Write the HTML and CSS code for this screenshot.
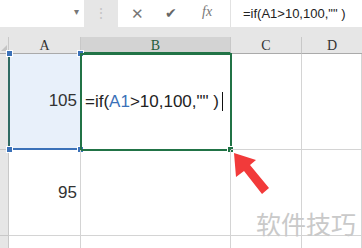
FILE: index.html
```html
<!DOCTYPE html>
<html lang="zh">
<head>
  <meta charset="UTF-8">
  <title>Excel</title>
  <link rel="stylesheet" href="styles.css">
</head>
<body>
  <div class="topbar">
    <div class="namebox"><span class="drop">▾</span></div>
    <div class="grip">⋮</div>
    <div class="fbar">
      <span class="ico cancel">✕</span>
      <span class="ico ok">✔</span>
      <span class="ico fx">fx</span>
      <span class="fdiv"></span>
      <span class="ftext">=if(A1&gt;10,100,"" )</span>
    </div>
  </div>
  <div class="gap"></div>
  <div class="sheet">
    <div class="corner"></div>
    <div class="colhead">A</div>
    <div class="colhead sel">B</div>
    <div class="colhead">C</div>
    <div class="colhead last">D</div>

    <div class="rowhead"></div>
    <div class="cell num ref">105
      <i class="h tl"></i><i class="h tr"></i><i class="h bl"></i><i class="h br"></i>
    </div>
    <div class="cell edit">=if(<span class="refc">A1</span>&gt;10,100,"" )<span class="caret"></span>
      <i class="fill"></i>
    </div>
    <div class="cell"></div>
    <div class="cell"></div>

    <div class="rowhead"></div>
    <div class="cell num">95</div>
    <div class="cell"></div>
    <div class="cell"></div>
    <div class="cell"></div>

    <div class="rowhead"></div>
    <div class="cell"></div>
    <div class="cell"></div>
    <div class="cell"></div>
    <div class="cell"></div>
  </div>

  <svg class="arrow" width="60" height="60" viewBox="0 0 60 60">
    <polygon points="1,1 3,25 11,19 29,42 36,36 17,13 23,8" fill="#f23a3a"/>
  </svg>
  <div class="mark">软件技巧</div>
</body>
</html>
```

FILE: styles.css
```css
body { margin: 0; width: 362px; height: 248px; overflow: hidden; background: #e6e6e6; position: relative;
  font-family: "Liberation Sans", Arial, sans-serif; color: #333; }

.topbar { display: flex; height: 27px; }
.namebox { width: 84px; background: #fff; position: relative; }
.drop { position: absolute; left: 74px; top: 6px; font-size: 10px; color: #777; }
.grip { width: 34px; text-align: center; color: #c4c4c4; font-size: 14px; line-height: 26px; }
.fbar { flex: 1; background: #fff; display: flex; align-items: center; position: relative; }
.ico { position: absolute; top: 5px; color: #666; }
.cancel { left: 13px; font-size: 15px; color: #777; }
.ok { left: 47px; font-size: 14px; color: #666; }
.fx { left: 84px; font-family: "Liberation Serif", serif; font-style: italic; font-size: 14px; color: #777; top: 4px; }
.fdiv { position: absolute; left: 112px; top: 0; width: 1px; height: 27px; background: #e2e2e2; }
.ftext { position: absolute; left: 125px; top: 6px; font-size: 13px; color: #222; }

.gap { height: 10px; }

.sheet { display: grid; grid-template-columns: 9px 72px 150px 71px 60px; grid-template-rows: 17px 96px 86px 20px; background: #fff; }
.corner { background: #e6e6e6; border-right: 1px solid #c8c8c8; border-bottom: 1px solid #aaa; box-sizing: border-box; position: relative; }
.corner::after { content: ""; position: absolute; left: 1px; bottom: 2px; border-left: 6px solid transparent; border-bottom: 6px solid #c4c4c4; }
.colhead { background: #e6e6e6; border-right: 1px solid #c8c8c8; border-bottom: 1px solid #aaa; box-sizing: border-box;
  font-family: "Liberation Serif", serif; font-size: 14px; text-align: center; line-height: 17px; color: #333; }
.colhead.sel { background: #d3d3d3; border-bottom: 2px solid #217346; color: #1f5c3a; }
.colhead.last { border-right: none; }
.rowhead { background: #e6e6e6; border-right: 1px solid #c8c8c8; border-bottom: 1px solid #c8c8c8; box-sizing: border-box; }
.cell { border-right: 1px solid #d4d4d4; border-bottom: 1px solid #d4d4d4; box-sizing: border-box; position: relative;
  display: flex; align-items: center; font-size: 17px; color: #333; }
.num { justify-content: flex-end; padding-right: 3px; }

.ref { background: #e8f0fa; border-left: 2px solid #2f6a62; border-bottom: 2px solid #3b71b8; border-right: 1px solid #2a6a52; margin-left: -1px; }
.h { position: absolute; width: 5px; height: 5px; background: #3b71b8; border: 1px solid #fff; }
.tl { left: -4px; top: -4px; }
.tr { right: -4px; top: -4px; }
.bl { left: -4px; bottom: -5px; }
.br { right: -4px; bottom: -5px; }

.edit { outline: 2px solid #217346; outline-offset: -1px; padding-left: 4px; color: #222; }
.refc { color: #3b71b8; }
.caret { display: inline-block; width: 1px; height: 19px; background: #111; margin-left: 3px; }
.fill { position: absolute; right: -4px; bottom: -4px; width: 5px; height: 5px; background: #217346; border: 1px solid #fff; }

.arrow { position: absolute; left: 233px; top: 152px; }
.mark { position: absolute; left: 256px; top: 205px; font-family: "Noto Sans CJK SC", sans-serif; font-size: 25px; color: #c9c9c9; }
```
